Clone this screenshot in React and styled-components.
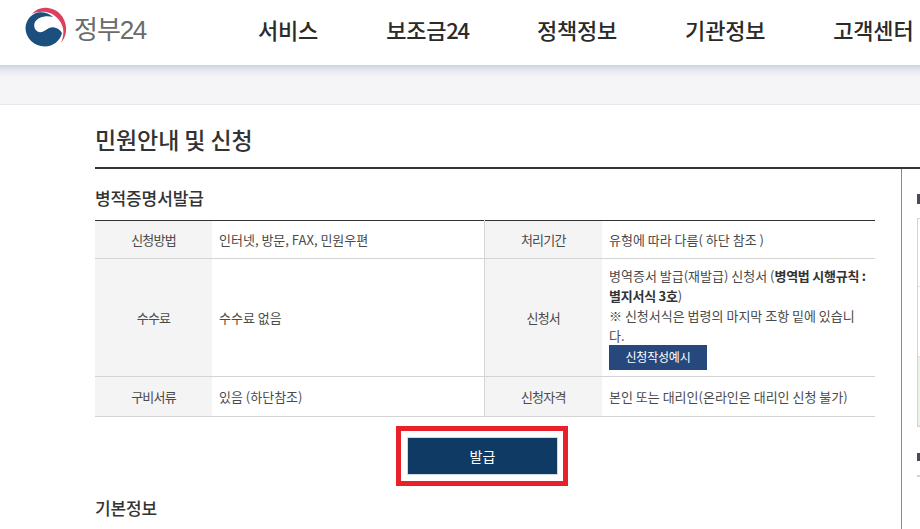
import React from "react";
import styled, { createGlobalStyle } from "styled-components";

const GlobalStyle = createGlobalStyle`
  html, body {
    margin: 0;
    padding: 0;
    background: #fff;
    overflow: hidden;
  }
  body {
    font-family: "Noto Sans CJK KR", "Noto Sans", sans-serif;
    color: #333;
  }
`;

const Logo = () => (
  <svg width="42" height="42" viewBox="0 0 42 42">
    <path
      d="M7 7 C11 2 17 0 23 1 C33 2 40 10 41 20 C41.500 26 40 31 36 36 C38 31 39 26 38 21 C36 13 29 6 21 5 C16 4.500 11 5 7 7Z"
      fill="#dd3f5f"
    />
    <path
      d="M0.500 21 C1 13 6 7 13 5.500 C18 4.500 24 6 28 10 C21 8 13 10 10 15 C8 19 10 24 14 25 C18 26 20 23 24 21 C29 19 34 21 37 26 C35 34 28 39.500 20 39.500 C9 39.500 0.500 31 0.500 21Z"
      fill="#1a4f7e"
    />
  </svg>
);

const App = () => (
  <>
    <GlobalStyle />
    <Page>
      <Header>
        <Brand>
          <Logo />
          <BrandName>
            정부<BrandNum>24</BrandNum>
          </BrandName>
        </Brand>
        <Nav>
          <NavItem>서비스</NavItem>
          <NavItem>
            보조금<NavNum>24</NavNum>
          </NavItem>
          <NavItem>정책정보</NavItem>
          <NavItem>기관정보</NavItem>
          <NavItem>고객센터</NavItem>
        </Nav>
      </Header>
      <Band />
      <Body>
        <PageTitle>민원안내 및 신청</PageTitle>
        <Columns>
          <Main>
            <SectionTitle>병적증명서발급</SectionTitle>
            <InfoTable>
              <tbody>
                <Row $height={38}>
                  <Label>신청방법</Label>
                  <Value>인터넷, 방문, FAX, 민원우편</Value>
                  <Label>처리기간</Label>
                  <Value>유형에 따라 다름( 하단 참조 )</Value>
                </Row>
                <Row $height={118}>
                  <Label>수수료</Label>
                  <Value>수수료 없음</Value>
                  <Label>신청서</Label>
                  <Value>
                    병역증서 발급(재발급) 신청서 (<b>병역법 시행규칙 : 별지서식 3호</b>)
                    <br />※ 신청서식은 법령의 마지막 조항 밑에 있습니다.
                    <SmallButton>신청작성예시</SmallButton>
                  </Value>
                </Row>
                <Row $height={40}>
                  <Label>구비서류</Label>
                  <Value>있음 (하단참조)</Value>
                  <Label>신청자격</Label>
                  <Value>본인 또는 대리인(온라인은 대리인 신청 불가)</Value>
                </Row>
              </tbody>
            </InfoTable>
            <ActionRow>
              <Highlight>
                <IssueButton>발급</IssueButton>
              </Highlight>
            </ActionRow>
            <SectionTitle>기본정보</SectionTitle>
          </Main>
          <Aside>
            <AsideHeading $height={10} />
            <AsideBox>
              <AsideCell $height={67} />
              <AsideCell $height={69} />
              <AsideCell $height={68} $green />
            </AsideBox>
            <AsideHeading $height={8} $top={26} />
            <AsideBox />
          </Aside>
        </Columns>
      </Body>
    </Page>
  </>
);

const Page = styled.div`
  width: 920px;
  height: 529px;
  overflow: hidden;
`;

const Header = styled.header`
  height: 65px;
  display: flex;
  align-items: center;
  background: #fff;
  padding-left: 25px;
  white-space: nowrap;
`;

const Brand = styled.div`
  display: flex;
  align-items: center;
  gap: 7px;
  width: 233px;
  margin-top: -10px;
`;

const BrandName = styled.span`
  font-size: 26px;
  letter-spacing: -1px;
  color: #6b6b6b;
`;

const BrandNum = styled.span`
  font-family: "Liberation Sans", sans-serif;
  font-size: 26px;
  letter-spacing: -1.5px;
`;

const Nav = styled.nav`
  display: flex;
  gap: 68px;
  margin-top: -7px;
`;

const NavItem = styled.a`
  font-size: 22px;
  font-weight: 500;
  letter-spacing: -0.2px;
  color: #2b2b2b;
`;

const NavNum = styled.span`
  letter-spacing: -1.2px;
`;

const Band = styled.div`
  height: 39px;
  background: linear-gradient(#cdd2e2 0, #e9e9f0 6px, #f5f4f6 12px);
  border-bottom: 1px solid #e8e8e8;
`;

const Body = styled.div`
  padding: 18px 0 0 95px;
`;

const PageTitle = styled.h1`
  margin: 0;
  height: 44px;
  font-size: 23px;
  line-height: 32px;
  font-weight: 500;
  letter-spacing: -0.1px;
  color: #333;
  border-bottom: 2px solid #333;
  white-space: nowrap;
`;

const Columns = styled.div`
  display: flex;
`;

const Main = styled.div`
  width: 780px;
  padding-top: 16px;
`;

const SectionTitle = styled.h2`
  margin: 0;
  height: 35px;
  font-size: 17px;
  line-height: 26px;
  font-weight: 500;
  letter-spacing: -0.1px;
  color: #333;
`;

const InfoTable = styled.table`
  width: 780px;
  table-layout: fixed;
  border-collapse: collapse;
  border-top: 1px solid #333;
  border-bottom: 1px solid #333;
  font-size: 13px;
  line-height: 20px;
`;

const Row = styled.tr`
  height: ${(p) => p.$height}px;
  border-bottom: 1px solid #d4d4d4;
`;

const Label = styled.th`
  box-sizing: border-box;
  width: 117px;
  padding: 0;
  background: #f4f4f4;
  font-weight: 400;
  letter-spacing: -0.8px;
  color: #4a4a4a;
  &:nth-child(3) {
    width: 118px;
    border-left: 1px solid #d4d4d4;
  }
`;

const Value = styled.td`
  box-sizing: border-box;
  padding: 3px 7px;
  color: #4a4a4a;
  word-break: break-all;
  &:nth-child(2) {
    width: 272px;
  }
  b {
    font-weight: 700;
    letter-spacing: -0.25px;
    color: #333;
  }
`;

const SmallButton = styled.button`
  display: block;
  width: 98px;
  height: 25px;
  margin-top: -1px;
  padding: 0;
  border: 0;
  background: #27487c;
  color: #fff;
  font: inherit;
  font-size: 12px;
  letter-spacing: -0.2px;
`;

const ActionRow = styled.div`
  display: flex;
  justify-content: center;
  padding: 9px 6px 9px 0;
`;

const Highlight = styled.div`
  border: 5px solid #e8202a;
  padding: 7px 6px 7px 7px;
`;

const IssueButton = styled.button`
  display: block;
  width: 149px;
  height: 36px;
  padding: 0;
  border: 0;
  outline: 1px solid #cfd8e3;
  background: #0f3a63;
  color: #fff;
  font: inherit;
  font-size: 14px;
`;

const Aside = styled.aside`
  margin-left: 26px;
  border-left: 1px solid #8a8a8a;
  padding: 25px 0 0 15px;
  height: 361px;
  flex: none;
  width: 200px;
`;

const AsideHeading = styled.div`
  width: 100px;
  height: ${(p) => p.$height}px;
  margin: ${(p) => p.$top || 0}px 0 14px;
  background: linear-gradient(90deg, #4a4a58 3px, transparent 3px);
`;

const AsideBox = styled.div`
  border: 1px solid #d4d4d4;
  border-right: 0;
`;

const AsideCell = styled.div`
  height: ${(p) => p.$height}px;
  background: ${(p) => (p.$green ? "#eaf3e6" : "#fff")};
  border-bottom: 1px solid #e2e2e2;
`;

export default App;
